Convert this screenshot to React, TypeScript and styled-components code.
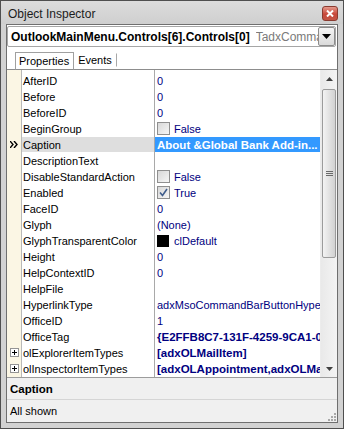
import React from 'react';
import styled, { createGlobalStyle } from 'styled-components';

const GlobalStyle = createGlobalStyle`
  html, body {
    margin: 0;
    padding: 0;
    background: #ffffff;
  }
  body {
    font-family: "Liberation Sans", Arial, sans-serif;
    font-size: 11px;
  }
  * {
    box-sizing: border-box;
  }
`;

const Window = styled.div`
  width: 344px;
  height: 429px;
  border: 1px solid #4f4f4f;
  background: #d2d2d2;
  display: flex;
  flex-direction: column;
`;

const TitleBar = styled.div`
  height: 23px;
  flex: none;
  display: flex;
  align-items: center;
  padding: 0 2px 0 7px;
  background: linear-gradient(#dcdcdc, #cfcfcf);
  color: #1c1c1c;
  font-size: 12px;
`;

const TitleText = styled.span`
  flex: 1;
  padding-top: 2px;
`;

const CloseButton = styled.div`
  width: 16px;
  height: 15px;
  margin-right: 3px;
  margin-top: 2px;
  border: 1px solid #8a3b30;
  border-radius: 3px;
  background: linear-gradient(#e59a8c, #c8483a 55%, #c25545);
  display: flex;
  align-items: center;
  justify-content: center;
`;

const Body = styled.div`
  flex: 1;
  margin: 0 5px 5px;
  border: 1px solid #6f6f6f;
  background: #ffffff;
  display: flex;
  flex-direction: column;
  min-height: 0;
`;

const ComboRow = styled.div`
  height: 23px;
  flex: none;
  padding: 1px 1px 1px 0;
`;

const Combo = styled.div`
  height: 21px;
  border: 1px solid #a6a6a6;
  border-radius: 2px;
  display: flex;
  align-items: center;
  overflow: hidden;
  padding: 0 0 0 3px;
`;

const ComboMain = styled.span`
  font-weight: bold;
  font-size: 12px;
  color: #000000;
  white-space: nowrap;
  flex: none;
`;

const ComboType = styled.span`
  flex: 1;
  min-width: 0;
  color: #7a7a7a;
  font-size: 12px;
  margin-left: 6px;
  white-space: nowrap;
  overflow: hidden;
`;

const DropButton = styled.div`
  width: 17px;
  height: 19px;
  flex: none;
  border: 1px solid #8c8c8c;
  border-radius: 2px;
  background: linear-gradient(#f4f4f4, #dadada);
  display: flex;
  align-items: center;
  justify-content: center;
`;

const TabStrip = styled.div`
  height: 22px;
  flex: none;
  display: flex;
  align-items: flex-end;
  padding-left: 8px;
  border-bottom: 1px solid #8d8d8d;
`;

const Tab = styled.div<{ $active?: boolean }>`
  display: flex;
  align-items: center;
  padding: 0 4px 0 3px;
  color: #000000;
  background: #ffffff;
  border: ${(p) => (p.$active ? '1px solid #a0a0a0' : '1px solid transparent')};
  border-bottom: ${(p) => (p.$active ? '1px solid #8d8d8d' : '1px solid transparent')};
  border-right: ${(p) => (p.$active ? '1px solid #a0a0a0' : '1px solid #a8a8a8')};
  height: ${(p) => (p.$active ? '18px' : '14px')};
  margin-bottom: ${(p) => (p.$active ? '-1px' : '2px')};
`;

const GridArea = styled.div`
  flex: 1;
  display: flex;
  min-height: 0;
`;

const GridBody = styled.div`
  flex: 1;
  padding-top: 2px;
  overflow: hidden;
  background:
    linear-gradient(to right,
      #fbf6e4 0 14px,
      #b9b9b9 14px 15px,
      transparent 15px 147px,
      #a9a9a9 147px 148px,
      transparent 148px);
`;

const Row = styled.div`
  height: 16px;
  display: grid;
  grid-template-columns: 14px 1px 132px 1px 1fr;
  align-items: stretch;
`;

const GutterCell = styled.div`
  display: flex;
  align-items: center;
  justify-content: center;
  grid-column: 1;
`;

const NameCell = styled.div<{ $selected?: boolean }>`
  grid-column: 3;
  display: flex;
  align-items: center;
  padding-left: 1px;
  margin-top: 1px;
  color: #000000;
  white-space: nowrap;
  overflow: hidden;
  background: ${(p) => (p.$selected ? '#dedede' : 'transparent')};
`;

const ValueCell = styled.div<{ $selected?: boolean; $bold?: boolean }>`
  grid-column: 5;
  display: flex;
  align-items: center;
  gap: 4px;
  padding-left: 2px;
  margin-top: 1px;
  white-space: nowrap;
  overflow: hidden;
  color: ${(p) => (p.$selected ? '#ffffff' : '#000080')};
  font-weight: ${(p) => (p.$bold || p.$selected ? 'bold' : 'normal')};
  font-size: ${(p) => (p.$bold || p.$selected ? '11.5px' : '11px')};
  background: ${(p) => (p.$selected ? '#3399ff' : 'transparent')};
`;

const CheckBox = styled.div`
  width: 13px;
  height: 13px;
  flex: none;
  border: 1px solid #8f8f8f;
  background: linear-gradient(135deg, #d8d8d8, #f6f6f6);
  display: flex;
  align-items: center;
  justify-content: center;
`;

const Swatch = styled.div`
  width: 12px;
  height: 12px;
  flex: none;
  background: #000000;
  margin-right: 1px;
`;

const PlusBox = styled.div`
  width: 9px;
  height: 9px;
  border: 1px solid #949494;
  background: #ffffff;
  display: flex;
  align-items: center;
  justify-content: center;
`;

const ScrollBar = styled.div`
  width: 17px;
  flex: none;
  background: linear-gradient(to right, #e9e9e9, #f4f4f4);
  border-left: 1px solid #ececec;
  display: flex;
  flex-direction: column;
  align-items: center;
`;

const ScrollArrow = styled.div`
  height: 17px;
  width: 100%;
  flex: none;
  display: flex;
  align-items: center;
  justify-content: center;
`;

const ScrollTrack = styled.div`
  flex: 1;
  width: 100%;
  padding: 2px 1px 0;
`;

const Thumb = styled.div`
  height: 169px;
  border: 1px solid #9b9b9b;
  border-radius: 2px;
  background: linear-gradient(to right, #f3f3f3, #e2e2e2 50%, #d2d2d2);
  display: flex;
  align-items: center;
  justify-content: center;
`;

const CaptionPanel = styled.div`
  height: 23px;
  flex: none;
  background: #f0f0f0;
  border-top: 1px solid #9c9c9c;
  border-bottom: 1px solid #d5d5d5;
  display: flex;
  align-items: center;
  padding-left: 3px;
  font-weight: bold;
  font-size: 11.5px;
  color: #000000;
`;

const StatusBar = styled.div`
  height: 22px;
  flex: none;
  background: #f0f0f0;
  display: flex;
  align-items: center;
  padding-left: 3px;
  color: #000000;
`;

const StatusText = styled.span`
  flex: 1;
`;

const Grip = styled.div`
  align-self: flex-end;
  width: 12px;
  height: 12px;
  display: flex;
`;

type Prop = {
  name: string;
  value?: string;
  kind?: 'text' | 'check' | 'checked' | 'color' | 'bold' | 'selected';
  expandable?: boolean;
};

const props: Prop[] = [
  { name: 'AfterID', value: '0' },
  { name: 'Before', value: '0' },
  { name: 'BeforeID', value: '0' },
  { name: 'BeginGroup', value: 'False', kind: 'check' },
  { name: 'Caption', value: 'About &Global Bank Add-in...', kind: 'selected' },
  { name: 'DescriptionText', value: '' },
  { name: 'DisableStandardAction', value: 'False', kind: 'check' },
  { name: 'Enabled', value: 'True', kind: 'checked' },
  { name: 'FaceID', value: '0' },
  { name: 'Glyph', value: '(None)' },
  { name: 'GlyphTransparentColor', value: 'clDefault', kind: 'color' },
  { name: 'Height', value: '0' },
  { name: 'HelpContextID', value: '0' },
  { name: 'HelpFile', value: '' },
  { name: 'HyperlinkType', value: 'adxMsoCommandBarButtonHyperlinkNone' },
  { name: 'OfficeID', value: '1' },
  { name: 'OfficeTag', value: '{E2FFB8C7-131F-4259-9CA1-0000000000}', kind: 'bold' },
  { name: 'olExplorerItemTypes', value: '[adxOLMailItem]', kind: 'bold', expandable: true },
  { name: 'olInspectorItemTypes', value: '[adxOLAppointment,adxOLMailItem]', kind: 'bold', expandable: true },
];

const ArrowMark = () => (
  <svg width="8" height="7" viewBox="0 0 8 7">
    <path d="M0 0 L3 3.5 L0 7 M4 0 L7 3.5 L4 7" stroke="#000" strokeWidth="1.4" fill="none" />
  </svg>
);

const Check = () => (
  <svg width="9" height="9" viewBox="0 0 9 9">
    <path d="M1 4.5 L3.5 7.5 L8 1" stroke="#3f5d8c" strokeWidth="1.6" fill="none" />
  </svg>
);

const Plus = () => (
  <svg width="7" height="7" viewBox="0 0 7 7">
    <path d="M1 3.5 H6 M3.5 1 V6" stroke="#000" strokeWidth="1" fill="none" />
  </svg>
);

function ValueContent({ p }: { p: Prop }) {
  if (p.kind === 'check' || p.kind === 'checked') {
    return (
      <>
        <CheckBox>{p.kind === 'checked' && <Check />}</CheckBox>
        <span>{p.value}</span>
      </>
    );
  }
  if (p.kind === 'color') {
    return (
      <>
        <Swatch />
        <span>{p.value}</span>
      </>
    );
  }
  return <span>{p.value}</span>;
}

export default function App() {
  return (
    <>
      <GlobalStyle />
      <Window>
        <TitleBar>
          <TitleText>Object Inspector</TitleText>
          <CloseButton>
            <svg width="8" height="7" viewBox="0 0 8 7">
              <path d="M1 0.5 L7 6.5 M7 0.5 L1 6.5" stroke="#fff" strokeWidth="2" />
            </svg>
          </CloseButton>
        </TitleBar>
        <Body>
          <ComboRow>
            <Combo>
              <ComboMain>OutlookMainMenu.Controls[6].Controls[0]</ComboMain>
              <ComboType>TadxCommandBarButton</ComboType>
              <DropButton>
                <svg width="9" height="5" viewBox="0 0 9 5">
                  <path d="M0 0 H9 L4.5 5 Z" fill="#000" />
                </svg>
              </DropButton>
            </Combo>
          </ComboRow>
          <TabStrip>
            <Tab $active>Properties</Tab>
            <Tab>Events</Tab>
          </TabStrip>
          <GridArea>
            <GridBody>
              {props.map((p) => (
                <Row key={p.name}>
                  <GutterCell>
                    {p.kind === 'selected' && <ArrowMark />}
                    {p.expandable && (
                      <PlusBox>
                        <Plus />
                      </PlusBox>
                    )}
                  </GutterCell>
                  <NameCell $selected={p.kind === 'selected'}>{p.name}</NameCell>
                  <ValueCell $selected={p.kind === 'selected'} $bold={p.kind === 'bold'}>
                    <ValueContent p={p} />
                  </ValueCell>
                </Row>
              ))}
            </GridBody>
            <ScrollBar>
              <ScrollArrow>
                <svg width="7" height="4" viewBox="0 0 7 4">
                  <path d="M0 4 H7 L3.5 0 Z" fill="#404040" />
                </svg>
              </ScrollArrow>
              <ScrollTrack>
                <Thumb>
                  <svg width="7" height="6" viewBox="0 0 7 6">
                    <path d="M0 0.5 H7 M0 2.5 H7 M0 4.5 H7" stroke="#6a6a6a" strokeWidth="1" />
                  </svg>
                </Thumb>
              </ScrollTrack>
              <ScrollArrow>
                <svg width="7" height="4" viewBox="0 0 7 4">
                  <path d="M0 0 H7 L3.5 4 Z" fill="#404040" />
                </svg>
              </ScrollArrow>
            </ScrollBar>
          </GridArea>
          <CaptionPanel>Caption</CaptionPanel>
          <StatusBar>
            <StatusText>All shown</StatusText>
            <Grip>
              <svg width="12" height="12" viewBox="0 0 12 12">
                {[
                  [9, 3],
                  [6, 6],
                  [9, 6],
                  [3, 9],
                  [6, 9],
                  [9, 9],
                ].map(([x, y]) => (
                  <rect key={`${x}-${y}`} x={x} y={y} width="2" height="2" fill="#a8a8a8" />
                ))}
              </svg>
            </Grip>
          </StatusBar>
        </Body>
      </Window>
    </>
  );
}
